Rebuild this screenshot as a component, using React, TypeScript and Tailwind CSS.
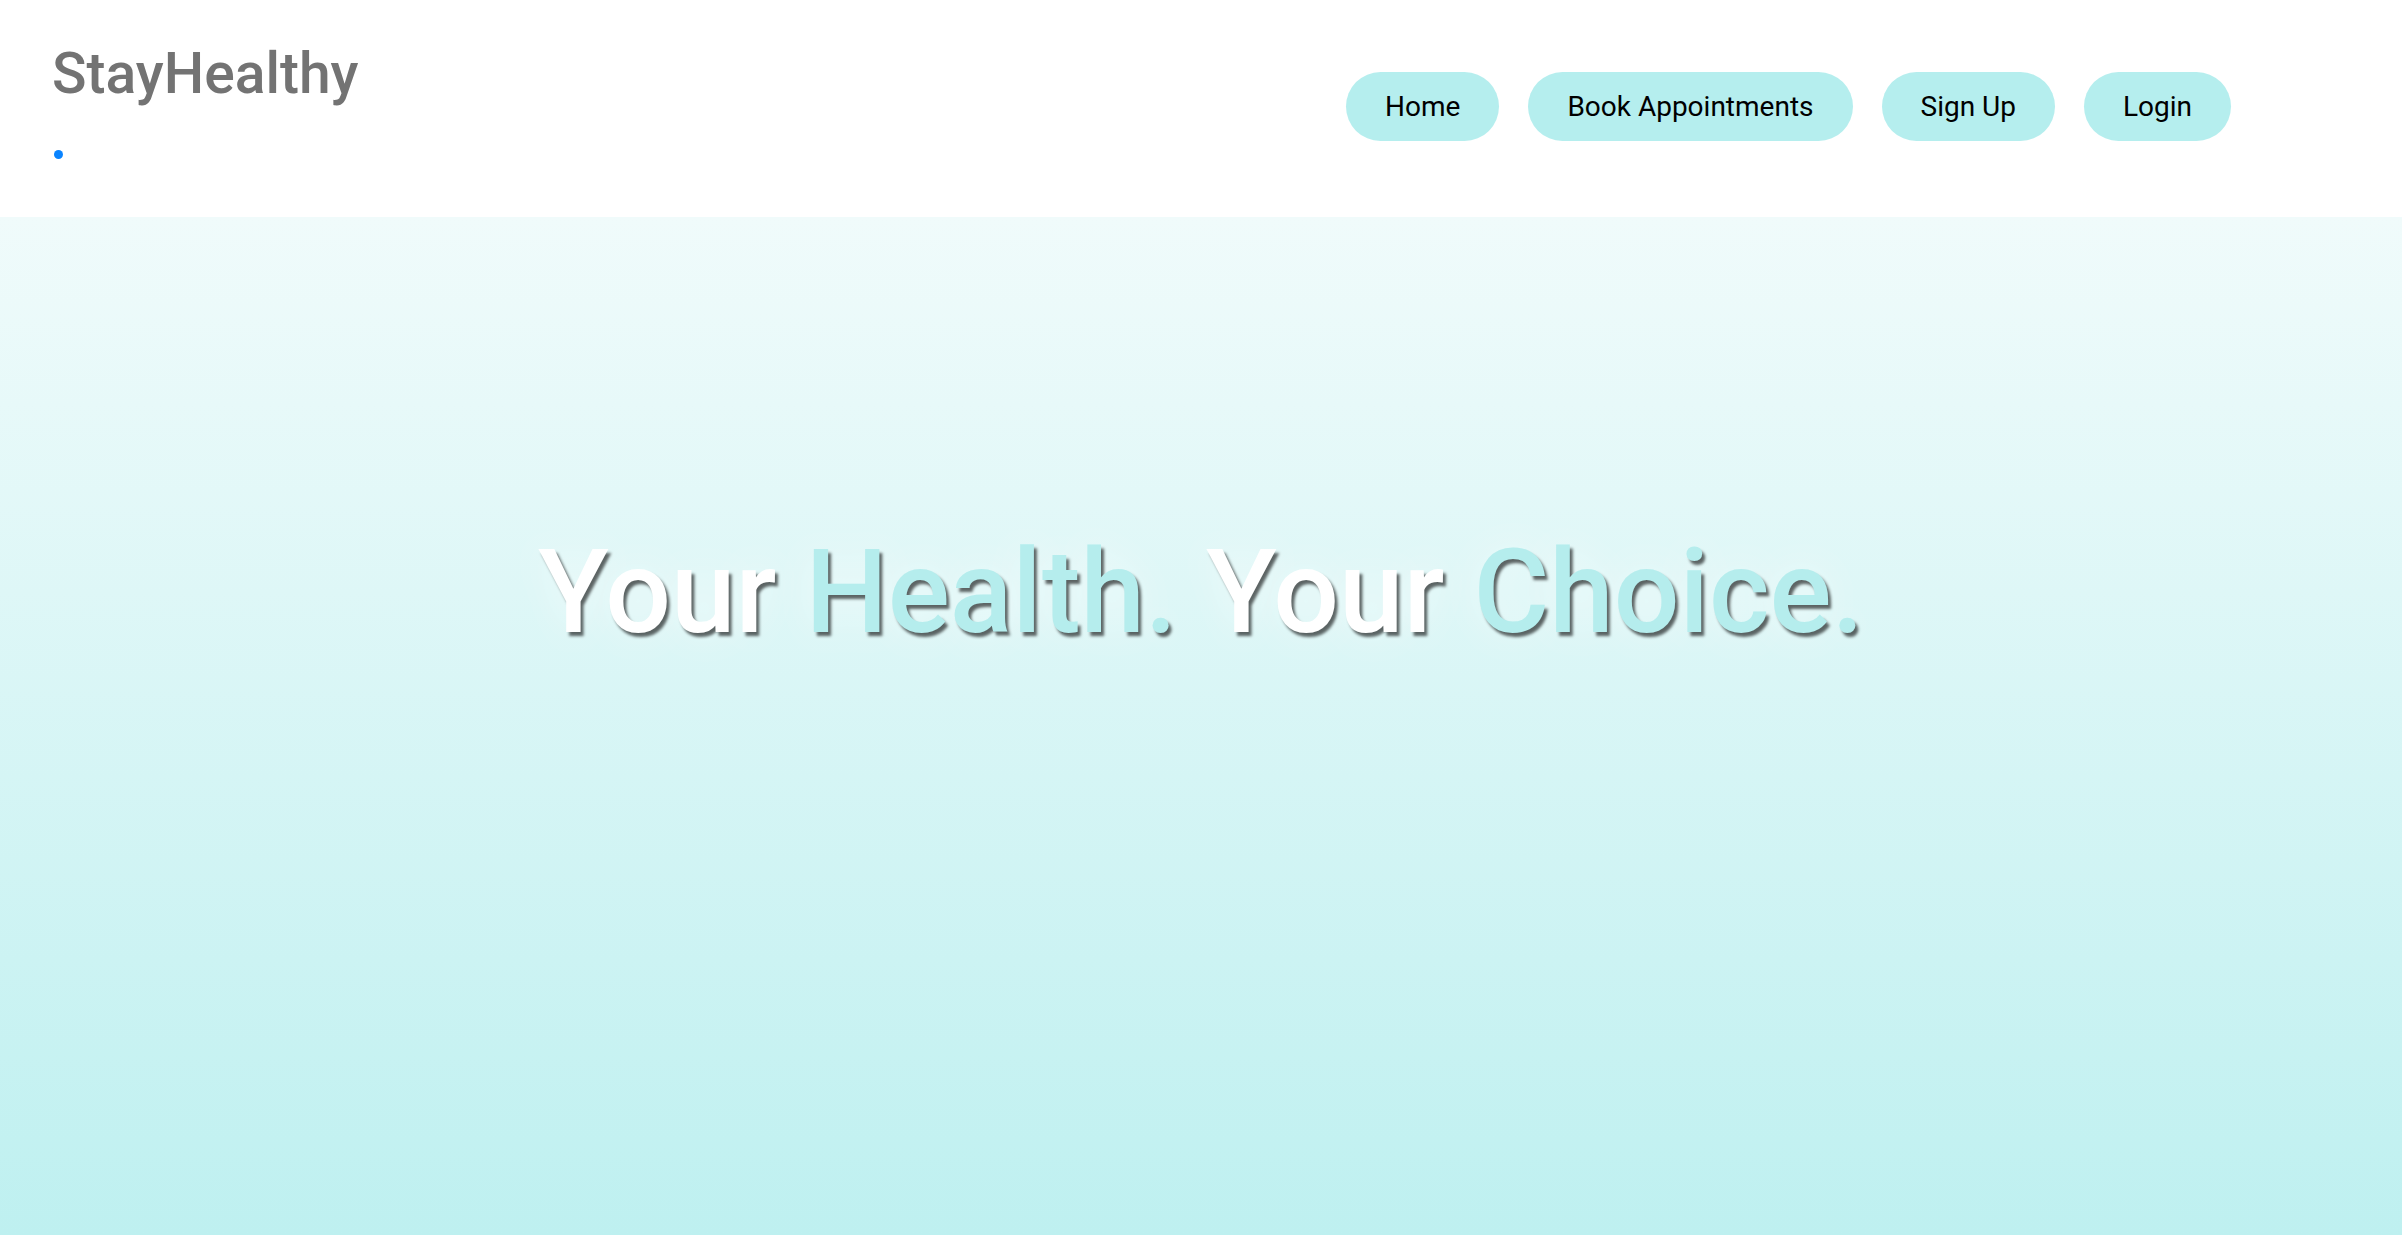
import React from "react";

const links = ["Home", "Book Appointments", "Sign Up", "Login"];

const Navbar = () => {
  return (
    <header className="h-[217px] bg-white flex justify-between items-start">
      <div className="ml-[52px]">
        <h1 className="mt-[40px] text-[57px] leading-[1.2] text-[#737373] font-medium">
          StayHealthy
        </h1>
        <ul className="mt-[42px] ml-[2px]">
          <li className="w-[9px] h-[9px] rounded-full bg-[#0a84ff]"></li>
        </ul>
      </div>
      <nav className="mt-[72px] mr-[171px] flex gap-[29px]">
        {links.map((l) => (
          <a
            key={l}
            href="#"
            className="h-[69px] px-[39px] flex items-center rounded-full bg-[#b5eeee] text-black text-[28px]"
          >
            {l}
          </a>
        ))}
      </nav>
    </header>
  );
};

const Hero = () => {
  return (
    <section className="h-[1018px] bg-linear-to-b from-[#f0fbfb] to-[#bef0f0] pt-[306px] text-center">
      <h2 className="text-[116px] leading-[1.2] font-medium text-white [text-shadow:3px_4px_3px_rgba(0,0,0,0.6),0_0_40px_rgba(255,255,255,0.6)]">
        Your <span className="text-[#b5eded]">Health.</span> Your{" "}
        <span className="text-[#b5eded]">Choice.</span>
      </h2>
    </section>
  );
};

export default function App() {
  return (
    <div className="min-h-screen font-['Roboto',sans-serif]">
      <Navbar />
      <Hero />
    </div>
  );
}
